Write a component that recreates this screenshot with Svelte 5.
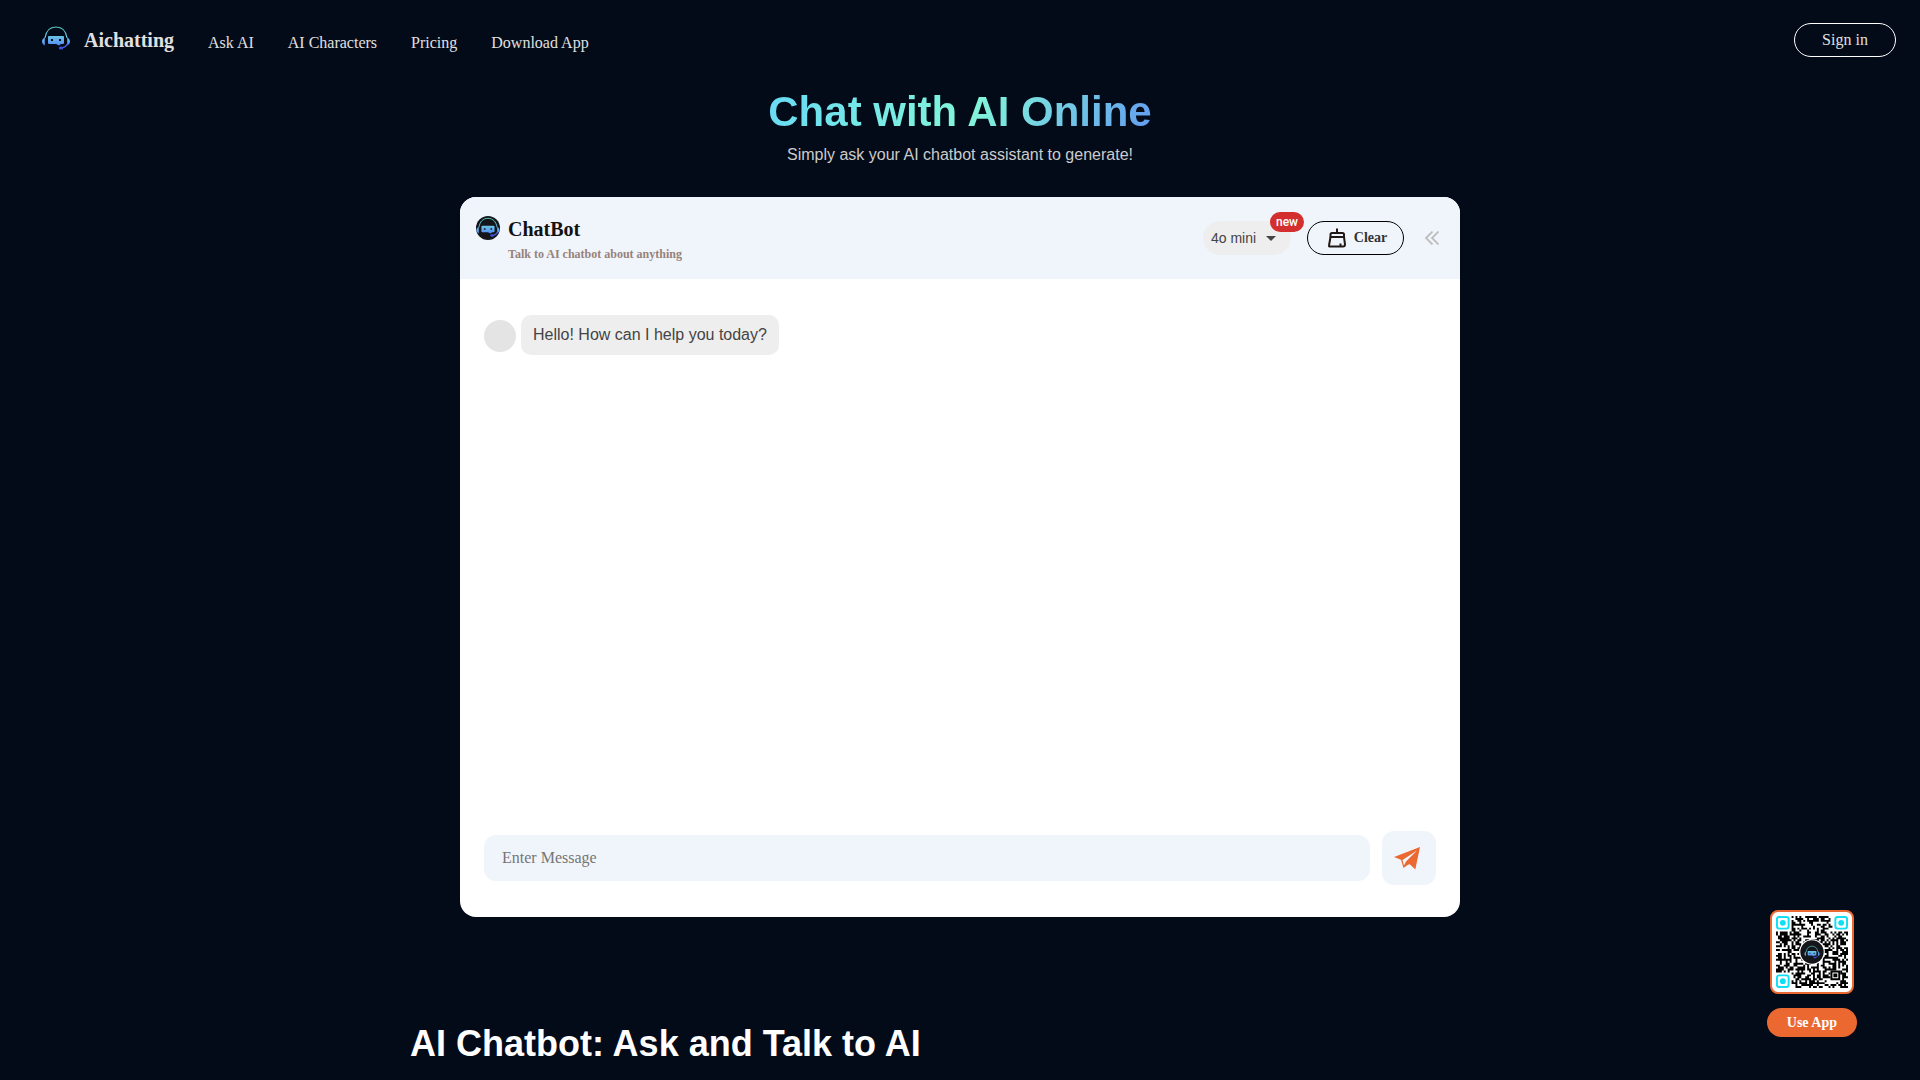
<script>
	let message = '';
	let model = '4o mini';
	let messages = [{ from: 'bot', text: 'Hello! How can I help you today?' }];

	const links = ['Ask AI', 'AI Characters', 'Pricing', 'Download App'];

	const sendMessage = () => {
		if (!message.trim()) {
			return;
		}
		messages = [...messages, { from: 'user', text: message }];
		message = '';
	};
	const clearChat = () => {
		messages = messages.slice(0, 1);
	};

	// modules of the app code, the three corners stay free for the finders
	const size = 37;
	const mix = (n) => {
		n = Math.imul(n ^ (n >>> 16), 0x7feb352d);
		n = Math.imul(n ^ (n >>> 15), 0x846ca68b);
		return (n ^ (n >>> 16)) >>> 0;
	};
	const buildCode = () => {
		let path = '';
		for (let y = 0; y < size; y++) {
			for (let x = 0; x < size; x++) {
				const corner = (x < 8 && y < 8) || (x > 28 && y < 8) || (x < 8 && y > 28);
				const align = x > 27 && x < 33 && y > 27 && y < 33;
				if (!corner && !align && mix(y * size + x + 1) / 4294967296 < 0.52) {
					path += `M${x} ${y}h1v1h-1z`;
				}
			}
		}
		return path;
	};
	const code = buildCode();
	const finders = [
		[0, 0],
		[30, 0],
		[0, 30]
	];
</script>

{#snippet logo()}
	<defs>
		<linearGradient id="bot" x1="0" y1="0" x2="0" y2="24" gradientUnits="userSpaceOnUse">
			<stop offset="0" stop-color="#55c9b4" />
			<stop offset="0.45" stop-color="#66c0e4" />
			<stop offset="0.7" stop-color="#5b9cf0" />
			<stop offset="1" stop-color="#3f55e8" />
		</linearGradient>
	</defs>
	<path d="M3 12C4 5 8 1 14 1S24 5 25 12" fill="none" stroke="url(#bot)" stroke-width="1.2" />
	<path d="M2.8 11.5v8C1 18.5 0 17 0 15.5s1-3.5 2.8-4zM25.2 11.5v8c1.8-1 2.8-2.5 2.8-4s-1-3.5-2.8-4z" fill="url(#bot)" />
	<path
		d="M7 10h14q1 0 1 1v6q0 1-1 1h-2l-2 1.5-3-1.5H7q-1 0-1-1v-6q0-1 1-1zM9 13v2h2v-2zM17 13v2h2v-2z"
		fill="url(#bot)"
		fill-rule="evenodd"
	/>
	<path d="M25.5 18q-1.5 3-5 3.7" fill="none" stroke="#4a63ea" stroke-width="1.4" />
	<ellipse cx="19" cy="22" rx="2.2" ry="1.5" fill="#4053e6" />
{/snippet}

<header class="topbar">
	<a class="brand" href="/">
		<svg width="28" height="24" viewBox="0 0 28 24" aria-hidden="true">{@render logo()}</svg>
		<span>Aichatting</span>
	</a>
	<nav>
		{#each links as link}
			<a href="/">{link}</a>
		{/each}
	</nav>
	<button class="signin">Sign in</button>
</header>

<main>
	<div class="hero">
		<h1>Chat with AI Online</h1>
		<p>Simply ask your AI chatbot assistant to generate!</p>
	</div>

	<section class="chat">
		<div class="chatHead">
			<div class="bot">
				<svg width="24" height="24" viewBox="0 0 24 24" aria-hidden="true">
					<circle cx="12" cy="12" r="12" fill="#141519" />
					<g transform="translate(0.5 1.5) scale(0.82)">{@render logo()}</g>
				</svg>
			</div>
			<div class="title">
				<div class="name">ChatBot</div>
				<div class="about">Talk to AI chatbot about anything</div>
			</div>
			<div class="model">
				<select aria-label="Model" bind:value={model}>
					<option>4o mini</option>
					<option>4o</option>
				</select>
				<svg class="caret" width="10" height="5" viewBox="0 0 10 5" aria-hidden="true">
					<path d="M0 0h10L5 5z" fill="#444" />
				</svg>
				<span class="badge">new</span>
			</div>
			<button class="clear" on:click={clearChat}>
				<svg width="18" height="20" viewBox="0 0 18 20" fill="none" stroke="#221815" stroke-width="2" stroke-linejoin="round" aria-hidden="true">
					<path d="M9 0.5v4M4 5h10.5q1.5 0 1.5 1.5V9H2.5V6.5Q2.5 5 4 5z" />
					<path d="M2.5 9L1 17.5q-.2 1 1 1h13q2 0 2-2L16 9M12.5 18v-2.5" />
				</svg>
				Clear
			</button>
			<button class="fold" aria-label="Collapse">
				<svg width="14" height="14" viewBox="0 0 14 14" fill="none" stroke="#bdbdbd" stroke-width="1.8" aria-hidden="true">
					<path d="M7.5.5L1 7l6.5 6.5M13.5.5L7 7l6.5 6.5" />
				</svg>
			</button>
		</div>

		<div class="messages">
			{#each messages as item}
				<div class="message {item.from}">
					<div class="avatar"></div>
					<div class="bubble">{item.text}</div>
				</div>
			{/each}
		</div>

		<form class="entry" on:submit|preventDefault={sendMessage}>
			<input type="text" aria-label="Enter Message" placeholder="Enter Message" bind:value={message} />
			<button class="send" aria-label="Send">
				<svg width="26" height="23" viewBox="0 0 26 23" aria-hidden="true">
					<path
						d="M26 0L0 10l7 2.8L9.5 21l4.5-3.3 1.8-.5 5.5 5.3zM23 3.5L12 14.5l-2 4-1.5-5.5z"
						fill="#eb6831"
						fill-rule="evenodd"
					/>
				</svg>
			</button>
		</form>
	</section>

	<h2>AI Chatbot: Ask and Talk to AI</h2>
</main>

<aside class="app">
	<div class="code">
		<svg viewBox="0 0 37 37" role="img" aria-label="App code">
			<path d={code} fill="#000" />
			{#each finders as [x, y]}
				<rect x={x + 0.5} y={y + 0.5} width="6" height="6" rx="1.2" fill="#fff" stroke="#0fdff5" />
				<circle cx={x + 3.5} cy={y + 3.5} r="1.5" fill="#0fdff5" />
			{/each}
			<path d="M28.5 28.5h4v4h-4zM30 30h1v1h-1z" fill="#fff" stroke="#000" />
			<circle cx="18.5" cy="18.5" r="6.6" fill="#fff" />
			<circle cx="18.5" cy="18.5" r="6" fill="#141519" />
			<g transform="translate(14.6 15.2) scale(0.28)">{@render logo()}</g>
		</svg>
	</div>
	<a class="useApp" href="/">Use App</a>
</aside>

<style>
	:global(body) {
		background: #030a18;
		font-family: 'Liberation Serif', 'Times New Roman', serif;
	}
	button,
	select,
	input {
		font: inherit;
		margin: 0;
	}
	button {
		cursor: pointer;
	}
	a {
		color: inherit;
		text-decoration: none;
	}
	.topbar {
		display: flex;
		align-items: center;
		height: 80px;
		padding: 0 24px 0 42px;
		color: #e0e0e0;
	}
	.brand {
		display: flex;
		align-items: center;
		gap: 14px;
		font-size: 20px;
		line-height: 24px;
		font-weight: bold;
	}
	.brand svg {
		margin-bottom: 4px;
	}
	nav {
		display: flex;
		flex: 1;
		gap: 34px;
		margin-left: 34px;
		padding-top: 6px;
		font-size: 16px;
		line-height: 20px;
	}
	.signin {
		width: 102px;
		height: 34px;
		padding: 0;
		border: 1px solid #fff;
		border-radius: 17px;
		background: none;
		color: #e0e0e0;
		font-size: 16px;
	}
	.hero {
		padding-top: 8px;
		text-align: center;
		font-family: 'Liberation Sans', Arial, sans-serif;
	}
	h1 {
		width: fit-content;
		margin: 0 auto;
		font-size: 42px;
		line-height: 48px;
		background: linear-gradient(117deg, #68daf4, #82f6da 53%, #629bf0);
		-webkit-background-clip: text;
		background-clip: text;
		color: transparent;
	}
	.hero p {
		margin: 7px 0 30px;
		font-size: 16px;
		line-height: 24px;
		color: #ccc;
	}
	.chat {
		display: flex;
		flex-direction: column;
		max-width: 1000px;
		min-height: 720px;
		margin: 0 auto;
		border-radius: 16px;
		overflow: hidden;
		background: #fff;
	}
	.chatHead {
		display: flex;
		flex: none;
		align-items: center;
		box-sizing: border-box;
		height: 82px;
		padding: 0 21px 0 16px;
		background: #f0f5fc;
	}
	.bot {
		height: 44px;
	}
	.bot svg {
		display: block;
	}
	.title {
		flex: 1;
		margin-left: 8px;
		font-weight: bold;
	}
	.name {
		font-size: 20px;
		line-height: 32px;
		color: #121212;
	}
	.about {
		font-size: 12px;
		line-height: 18px;
		color: #97827a;
	}
	.model {
		position: relative;
		margin-right: 16px;
	}
	.model select {
		display: block;
		width: 88px;
		height: 34px;
		padding: 0 8px;
		border: 0;
		border-radius: 17px;
		background: #eee;
		color: #444;
		appearance: none;
		font-family: 'Liberation Sans', Arial, sans-serif;
		font-size: 14px;
	}
	.caret {
		position: absolute;
		top: 15px;
		right: 15px;
		pointer-events: none;
	}
	.badge {
		position: absolute;
		top: -9px;
		right: -13px;
		padding: 0 6px;
		border-radius: 10px;
		background: #d32f2f;
		color: #fff;
		font-family: Roboto, sans-serif;
		font-size: 12px;
		font-weight: 500;
		line-height: 20px;
	}
	.clear {
		display: flex;
		align-items: center;
		justify-content: center;
		gap: 8px;
		width: 97px;
		height: 34px;
		padding: 0 0 0 4px;
		border: 1px solid #000;
		border-radius: 17px;
		background: none;
		color: #333;
		font-size: 14px;
		font-weight: bold;
	}
	.fold {
		display: flex;
		margin-left: 21px;
		padding: 0;
		border: 0;
		background: none;
	}
	.messages {
		flex: 1;
		padding: 32px 24px;
	}
	.message {
		display: flex;
		align-items: flex-end;
		gap: 5px;
		margin-bottom: 16px;
		font-family: 'Liberation Sans', Arial, sans-serif;
		font-size: 16px;
		line-height: 24px;
		color: #444;
	}
	.message.user {
		flex-direction: row-reverse;
	}
	.avatar {
		width: 32px;
		height: 32px;
		margin-bottom: 3px;
		border-radius: 50%;
		background: #e4e4e4;
	}
	.bubble {
		padding: 8px 12px;
		border-radius: 10px;
		background: #eee;
	}
	.entry {
		display: flex;
		align-items: center;
		gap: 12px;
		padding: 0 24px 32px;
	}
	.entry input {
		flex: 1;
		height: 46px;
		padding: 0 18px;
		box-sizing: border-box;
		border: 0;
		border-radius: 12px;
		background: #f0f5fc;
		font-size: 16px;
	}
	.entry input::placeholder {
		color: #757575;
	}
	.send {
		display: flex;
		align-items: center;
		justify-content: center;
		width: 54px;
		height: 54px;
		padding: 0 4px 0 0;
		border: 0;
		border-radius: 12px;
		background: #f0f5fc;
	}
	h2 {
		max-width: 1100px;
		margin: 105px auto 0;
		font-family: 'Liberation Sans', Arial, sans-serif;
		font-size: 36px;
		line-height: 44px;
		color: #fff;
	}
	.app {
		position: fixed;
		right: 63px;
		bottom: 43px;
		display: flex;
		flex-direction: column;
		align-items: center;
		gap: 14px;
	}
	.code {
		width: 72px;
		height: 72px;
		padding: 4px;
		border: 2px solid #eb6831;
		border-radius: 8px;
		background: #fff;
	}
	.code svg {
		display: block;
	}
	.useApp {
		padding: 0 20px;
		border-radius: 15px;
		background: #eb6831;
		color: #fff;
		font-size: 14px;
		font-weight: bold;
		line-height: 29px;
	}
</style>
